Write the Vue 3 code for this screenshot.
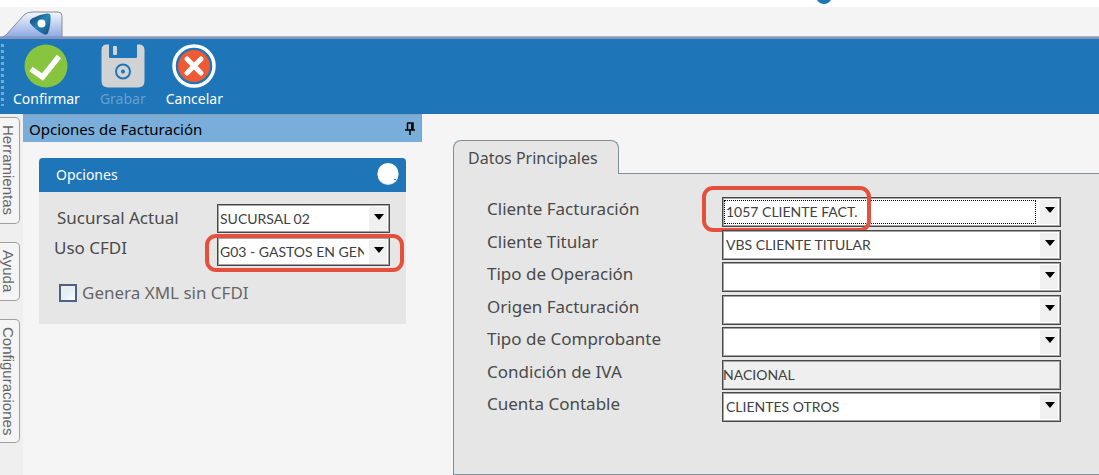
<script setup>
import { ref } from 'vue'

const sideTabs = [
  { label: 'Herramientas', size: 'large' },
  { label: 'Ayuda', size: 'small' },
  { label: 'Configuraciones', size: 'xlarge' }
]

const options = ref([
  { id: 'sucursal', label: 'Sucursal Actual', value: 'SUCURSAL 02' },
  { id: 'cfdi', label: 'Uso CFDI', value: 'G03 - GASTOS EN GENERAL', marked: true }
])

const fields = ref([
  { id: 'cliente', label: 'Cliente Facturación', value: '1057 CLIENTE FACT.', marked: true },
  { id: 'titular', label: 'Cliente Titular', value: 'VBS CLIENTE TITULAR' },
  { id: 'operacion', label: 'Tipo de Operación', value: '' },
  { id: 'origen', label: 'Origen Facturación', value: '' },
  { id: 'comprobante', label: 'Tipo de Comprobante', value: '' },
  { id: 'iva', label: 'Condición de IVA', value: 'NACIONAL', readonly: true },
  { id: 'cuenta', label: 'Cuenta Contable', value: 'CLIENTES OTROS' }
])

const sinCfdi = ref(false)
</script>

<template>
  <div class="window">
    <header class="tabstrip">
      <span class="dot"></span>
      <svg class="apptab" width="66" height="26" viewBox="0 0 66 26" aria-hidden="true">
        <defs>
          <linearGradient id="tabfill" x1="0" y1="0" x2="0" y2="1">
            <stop offset="0" stop-color="#f4f7fd" />
            <stop offset="1" stop-color="#8ea9e4" />
          </linearGradient>
          <linearGradient id="logofill" x1="0" y1="0" x2="1" y2="1">
            <stop offset="0" stop-color="#123c63" />
            <stop offset="0.5" stop-color="#2585bd" />
            <stop offset="1" stop-color="#174b73" />
          </linearGradient>
        </defs>
        <path d="M3 26 L6 24 L24 4 Q27 1 32 1 H58 Q62 1 62 5 V26 Z" fill="url(#tabfill)" stroke="#8b8b91" />
        <path d="M30 12 Q29 9 33 7 Q40 3 47 2.500 Q50.500 2 50.500 5 Q51 14 48 22 Q46.500 25 43.500 23 Q35 19 30 12Z" fill="url(#logofill)" />
        <circle cx="41.500" cy="12.500" r="4" fill="#fff" />
      </svg>
    </header>

    <nav class="toolbar">
      <span class="grip"></span>
      <button class="tool" type="button">
        <svg width="44" height="44" viewBox="0 0 44 44" aria-hidden="true">
          <circle cx="22" cy="22" r="21.500" fill="#87c440" />
          <path d="M7 25 L18.500 33 L35 12.500" fill="none" stroke="#fff" stroke-width="5.500" />
        </svg>
        <span>Confirmar</span>
      </button>
      <button class="tool" type="button" disabled>
        <svg width="44" height="44" viewBox="0 0 44 44" aria-hidden="true">
          <path d="M5 0.500 H8 V13 Q8 14 9 14 H35 Q36 14 36 13 V0.500 H39 Q43.500 1 43.500 6 V37 Q43.500 43.500 37 43.500 H7 Q0.500 43.500 0.500 37 V6 Q0.500 1 5 0.500Z" fill="#d0d2d4" />
          <rect x="12" y="2" width="4" height="9" rx="1" fill="#d0d2d4" />
          <circle cx="22" cy="27.500" r="7" fill="none" stroke="#1e75b8" stroke-width="2" />
          <circle cx="22" cy="27.500" r="2" fill="#1e75b8" />
        </svg>
        <span>Grabar</span>
      </button>
      <button class="tool" type="button">
        <svg width="44" height="44" viewBox="0 0 44 44" aria-hidden="true">
          <circle cx="22" cy="22" r="20" fill="#1e75b8" stroke="#fff" stroke-width="3.500" />
          <circle cx="22" cy="22" r="16" fill="#ee5a34" />
          <path d="M15 15 L29 29 M29 15 L15 29" stroke="#fff" stroke-width="5" stroke-linecap="round" />
        </svg>
        <span>Cancelar</span>
      </button>
    </nav>

    <div class="body">
      <aside class="sidetabs">
        <button v-for="t in sideTabs" :key="t.label" type="button" :class="['sidetab', t.size]">{{ t.label }}</button>
      </aside>

      <section class="panel">
        <h2 class="paneltitle">
          <span>Opciones de Facturación</span>
          <svg width="10" height="13" viewBox="0 0 10 13" aria-hidden="true">
            <path d="M2 1 H8 V8 M2.500 1 V8 M0 8 H10 M5 8 V13" fill="none" stroke="#000" stroke-width="1.500" />
            <path d="M6 1 H8 V8 H6Z" />
          </svg>
        </h2>
        <div class="card">
          <h3 class="cardtitle">
            <span>Opciones</span>
            <svg width="22" height="24" viewBox="0 0 22 24" aria-hidden="true">
              <circle cx="11" cy="12.500" r="10.500" fill="#d5e2ee" />
              <circle cx="11" cy="11.500" r="10.500" fill="#fff" />
              <path d="M17 17 H19 V18 H17Z" fill="#1e75b8" />
            </svg>
          </h3>
          <div class="cardbody">
            <div v-for="o in options" :key="o.id" :class="['option', o.id]">
              <label :for="o.id">{{ o.label }}</label>
              <div class="control">
                <select :id="o.id" v-model="o.value">
                  <option>{{ o.value }}</option>
                </select>
                <svg class="arrow" width="10" height="6" viewBox="0 0 10 6" aria-hidden="true"><path d="M0 0 H10 L5 6Z" /></svg>
                <span v-if="o.marked" class="mark"></span>
              </div>
            </div>
            <label class="check">
              <input v-model="sinCfdi" type="checkbox" />
              <span>Genera XML sin CFDI</span>
            </label>
          </div>
        </div>
      </section>

      <main class="main">
        <h2 class="maintab">Datos Principales</h2>
        <div class="sheet">
          <div v-for="f in fields" :key="f.id" class="row">
            <label :for="f.id">{{ f.label }}</label>
            <div class="control">
              <input v-if="f.readonly" :id="f.id" type="text" :value="f.value" readonly />
              <template v-else>
                <select :id="f.id" v-model="f.value">
                  <option>{{ f.value }}</option>
                </select>
                <svg class="arrow" width="10" height="6" viewBox="0 0 10 6" aria-hidden="true"><path d="M0 0 H10 L5 6Z" /></svg>
              </template>
              <span v-if="f.marked" class="focus"></span>
              <span v-if="f.marked" class="mark"></span>
            </div>
          </div>
        </div>
      </main>
    </div>
  </div>
</template>

<style>
body {
  margin: 0;
  background: #f5f5f5;
}
</style>

<style scoped>
* {
  box-sizing: border-box;
}
.window {
  display: flex;
  flex-direction: column;
  min-height: 100vh;
  font-family: "Noto Sans", "Open Sans", sans-serif;
  color: #4a4a4a;
  overflow: hidden;
}
h2,
h3 {
  margin: 0;
  font-weight: 400;
}
.tabstrip {
  position: relative;
  display: flex;
  align-items: flex-end;
  height: 39px;
  border-top: 7px solid #fff;
  border-bottom: 2px solid #8096cb;
  background: linear-gradient(#f4f4f4 29px, #b3b3b6 29px);
}
.dot {
  position: absolute;
  top: -19px;
  left: 75%;
  width: 16px;
  height: 16px;
  margin-left: -8px;
  border-radius: 50%;
  background: #1e75b8;
}
.apptab {
  display: block;
}
.toolbar {
  display: flex;
  align-items: flex-start;
  gap: 20px;
  height: 75px;
  padding: 5px 0 0 1px;
  background: #1e75b8;
}
.grip {
  width: 3px;
  height: 62px;
  margin-right: -11px;
  background: repeating-linear-gradient(#72abd7 0 3px, #1e75b8 3px 6px);
}
.tool {
  display: flex;
  flex-direction: column;
  align-items: center;
  gap: 2px;
  padding: 0;
  border: 0;
  background: none;
  color: #fff;
  font: 14px/18px "Noto Sans", sans-serif;
}
.tool:disabled {
  color: #64a0d2;
}
.body {
  display: flex;
  flex: 1;
}
.sidetabs {
  display: flex;
  flex-direction: column;
  align-items: flex-start;
  gap: 18px;
  width: 23px;
  padding-top: 3px;
  background: #efefef;
}
.sidetab {
  width: 20px;
  padding: 0 2px 0 0;
  border: 1px solid #a0a0a0;
  border-left: 0;
  border-radius: 0 5px 5px 0;
  background: #f5f5f5;
  color: #666;
  font: 15px/17px "Liberation Sans", sans-serif;
  writing-mode: vertical-rl;
}
.large {
  height: 107px;
}
.small {
  height: 59px;
}
.xlarge {
  height: 124px;
}
.panel {
  flex: 0 0 399px;
}
.paneltitle {
  display: flex;
  align-items: center;
  justify-content: space-between;
  height: 28px;
  padding: 0 6px;
  border-top: 1px solid #8b9fb5;
  border-right: 1px solid #8b9fb5;
  background: #79aedb;
  color: #000;
  font-size: 15px;
}
.card {
  margin: 16px 16px 0;
  background: #e6e6e6;
}
.cardtitle {
  display: flex;
  align-items: center;
  justify-content: space-between;
  height: 34px;
  padding: 0 7px 2px 17px;
  border-radius: 4px 4px 0 0;
  background: #1e75b8;
  color: #fff;
  font-size: 14px;
}
.cardbody {
  height: 132px;
  padding: 12px 16px 0 18px;
}
.option {
  display: flex;
  justify-content: space-between;
  margin-bottom: 4px;
  font-size: 17px;
}
.option label {
  line-height: 28px;
}
.cfdi label {
  margin-left: -3px;
  line-height: 22px;
}
.option .control {
  width: 173px;
}
.control {
  position: relative;
}
.control select,
.control input {
  display: block;
  width: 100%;
  height: 30px;
  margin: 0;
  border: 1px solid #484848;
  border-radius: 0;
  outline: 0;
  box-shadow: inset 0 0 0 1px #a4a4a4;
  background: #fff;
  color: #404040;
  font: 14px/20px Lato, sans-serif;
}
.control select {
  appearance: none;
  padding: 0 25px 0 3px;
  background: linear-gradient(#f0f0f0, #f0f0f0) right 2px center / 18px 24px no-repeat #fff;
}
.option .control select {
  height: 29px;
  padding-left: 2px;
}
.control input {
  padding: 0;
  background: #efefef;
}
.arrow {
  position: absolute;
  top: 10px;
  right: 6px;
}
.mark {
  position: absolute;
  top: -3px;
  left: -12px;
  right: -14px;
  height: 38px;
  border: 4px solid #e5503c;
  border-radius: 11px;
  pointer-events: none;
}
.check {
  display: inline-flex;
  align-items: center;
  gap: 5px;
  margin: 12px 0 0 2px;
  color: #666;
  font-size: 17px;
  line-height: 22px;
}
.check input {
  appearance: none;
  width: 18px;
  height: 18px;
  margin: 0;
  border: 2px solid #4a6380;
  background: linear-gradient(135deg, #f3e9e2, #e3eff8 50%, #fff);
}
.main {
  display: flex;
  flex: 1;
  flex-direction: column;
  align-items: flex-start;
  padding: 26px 0 0 31px;
}
.maintab {
  z-index: 1;
  height: 34px;
  margin-bottom: -1px;
  padding: 0 20px 0 14px;
  border: 1px solid #819197;
  border-bottom: 0;
  border-radius: 8px 8px 0 0;
  background: #e6e6e6;
  font-size: 16px;
  line-height: 34px;
}
.sheet {
  display: flex;
  flex: 1;
  flex-direction: column;
  justify-content: space-between;
  gap: 2px;
  width: 100%;
  padding: 23px 38px 52px 33px;
  border: 1px solid #819197;
  border-right: 0;
  background: #e6e6e6;
}
.row {
  display: grid;
  grid-template-columns: 235px 1fr;
  font-size: 17px;
}
.row label {
  line-height: 24px;
}
.focus {
  position: absolute;
  inset: 3px 25px 3px 2px;
  border: 1px dotted #000;
  pointer-events: none;
}
.row .mark {
  top: -11px;
  left: -20px;
  right: auto;
  width: 169px;
  height: 46px;
}
</style>
